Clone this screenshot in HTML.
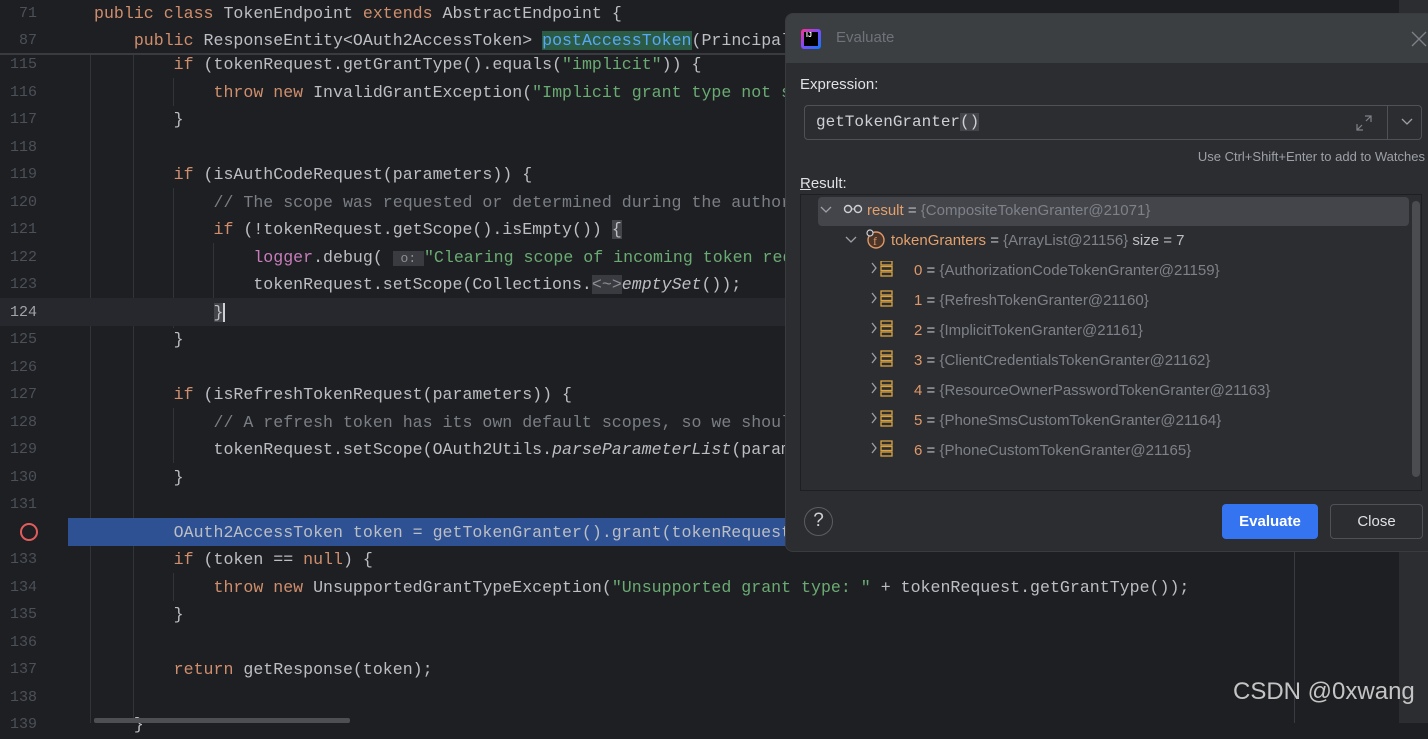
<!DOCTYPE html>
<html><head><meta charset="utf-8"><style>
*{margin:0;padding:0;box-sizing:border-box}
body{width:1428px;height:723px;overflow:hidden;background:#1e1f22;position:relative;font-family:"Liberation Mono",monospace;}
.strip{position:absolute;left:1399px;top:0;width:29px;height:723px;background:#2b2d30}
.vl{position:absolute;left:1294px;top:0;width:1px;height:723px;background:#393b40}
.ln{position:absolute;left:0;width:37px;text-align:right;font-size:15px;color:#4b5059;height:27.5px;line-height:27.5px}
.cl{position:absolute;left:94px;font-size:16.6px;color:#bcbec4;white-space:pre;height:27.5px;line-height:27.5px}
.k{color:#cf8e6d}.s{color:#6aab73}.c{color:#7a7e85}.m{color:#56a8f5}.p{color:#c77dbb}.i{font-style:italic}
.g{position:absolute;width:1px;background:#313438}
.sticky{position:absolute;left:0;top:0;width:1399px;height:55px;background:#1e1f22;border-bottom:2px solid #393b40}
.dlg{position:absolute;left:785px;top:13px;width:650px;height:539px;background:#2b2d30;border-radius:8px;overflow:hidden;font-family:"Liberation Sans",sans-serif;border:1px solid #393b40}
.tb{height:49px;background:#3c3f41;position:relative}
.t{position:absolute;font-size:15px;color:#dfe1e5;white-space:nowrap}
.row{position:absolute;font-size:15px;white-space:nowrap;color:#bcbec4;height:30px;line-height:30px}
.o{color:#e3a06d}.gr{color:#7e8189}.n{color:#e0986a}
.chev{display:inline-block;width:7px;height:7px;border-right:1.5px solid #9da0a8;border-bottom:1.5px solid #9da0a8;}
.arr{position:absolute;width:22px;height:12px}
</style></head><body>
<div class="strip"></div><div class="vl"></div>
<div class="g" style="left:90px;top:55px;height:668px"></div>
<div class="g" style="left:133px;top:55px;height:668px"></div>
<div class="g" style="left:173px;top:78px;height:28px"></div>
<div class="g" style="left:173px;top:188px;height:140px"></div>
<div class="g" style="left:173px;top:408px;height:55px"></div>
<div class="g" style="left:213px;top:243px;height:55px"></div>
<div class="g" style="left:173px;top:573px;height:28px"></div>
<!-- current line -->
<div style="position:absolute;left:0;top:298px;width:1294px;height:28px;background:#26282e"></div>
<!-- breakpoint line -->
<div style="position:absolute;left:68px;top:518px;width:800px;height:28px;background:#2d5192"></div>
<div style="position:absolute;left:20px;top:523px;width:18px;height:18px;border:2px solid #e35c5c;border-radius:50%"></div>

<div class="ln" style="top:51px">115</div><div class="cl" style="top:51px">        <span class="k">if</span> (tokenRequest.getGrantType().equals(<span class="s">"implicit"</span>)) {</div>
<div class="ln" style="top:78.5px">116</div><div class="cl" style="top:78.5px">            <span class="k">throw new</span> InvalidGrantException(<span class="s">"Implicit grant type not supported"</span></div>
<div class="ln" style="top:106px">117</div><div class="cl" style="top:106px">        }</div>
<div class="ln" style="top:133.5px">118</div>
<div class="ln" style="top:161px">119</div><div class="cl" style="top:161px">        <span class="k">if</span> (isAuthCodeRequest(parameters)) {</div>
<div class="ln" style="top:188.5px">120</div><div class="cl c" style="top:188.5px">            // The scope was requested or determined during the authorization</div>
<div class="ln" style="top:216px">121</div><div class="cl" style="top:216px">            <span class="k">if</span> (!tokenRequest.getScope().isEmpty()) <span style="background:#43454a">{</span></div>
<div class="ln" style="top:243.5px">122</div><div class="cl" style="top:243.5px">                <span class="p">logger</span>.debug( <span style="background:#393b40;color:#8c8f96;font-size:13px"> o: </span><span class="s">"Clearing scope of incoming token request"</span></div>
<div class="ln" style="top:271px">123</div><div class="cl" style="top:271px">                tokenRequest.setScope(Collections.<span style="background:#393b40;color:#8c8f96">&lt;~&gt;</span><span class="i">emptySet</span>());</div>
<div class="ln" style="top:298.5px;color:#a1a3ab">124</div><div class="cl" style="top:298.5px">            <span style="background:#43454a">}</span><span style="border-left:2px solid #ced0d6"></span></div>
<div class="ln" style="top:326px">125</div><div class="cl" style="top:326px">        }</div>
<div class="ln" style="top:353.5px">126</div>
<div class="ln" style="top:381px">127</div><div class="cl" style="top:381px">        <span class="k">if</span> (isRefreshTokenRequest(parameters)) {</div>
<div class="ln" style="top:408.5px">128</div><div class="cl c" style="top:408.5px">            // A refresh token has its own default scopes, so we should ignore</div>
<div class="ln" style="top:436px">129</div><div class="cl" style="top:436px">            tokenRequest.setScope(OAuth2Utils.<span class="i">parseParameterList</span>(parameters</div>
<div class="ln" style="top:463.5px">130</div><div class="cl" style="top:463.5px">        }</div>
<div class="ln" style="top:491px">131</div>
<div class="cl" style="top:518.5px">        OAuth2AccessToken token = getTokenGranter().grant(tokenRequest.getGrantType</div>
<div class="ln" style="top:546px">133</div><div class="cl" style="top:546px">        <span class="k">if</span> (token == <span class="k">null</span>) {</div>
<div class="ln" style="top:573.5px">134</div><div class="cl" style="top:573.5px">            <span class="k">throw new</span> UnsupportedGrantTypeException(<span class="s">"Unsupported grant type: "</span> + tokenRequest.getGrantType());</div>
<div class="ln" style="top:601px">135</div><div class="cl" style="top:601px">        }</div>
<div class="ln" style="top:628.5px">136</div>
<div class="ln" style="top:656px">137</div><div class="cl" style="top:656px">        <span class="k">return</span> getResponse(token);</div>
<div class="ln" style="top:683.5px">138</div>
<div class="ln" style="top:711px">139</div><div class="cl" style="top:711px">    }</div>
<div style="position:absolute;left:94px;top:718px;width:256px;height:5px;background:#4d4f53;border-radius:2px"></div>

<div class="sticky">
<div class="ln" style="top:0">71</div><div class="cl" style="top:0;left:94px"><span class="k">public class</span> TokenEndpoint <span class="k">extends</span> AbstractEndpoint {</div>
<div class="ln" style="top:27px">87</div><div class="cl" style="top:27px;left:94px">    <span class="k">public</span> ResponseEntity&lt;OAuth2AccessToken&gt; <span class="m" style="background:#2b5a45">postAccessToken</span>(Principal principal,</div>
</div>

<div style="position:absolute;left:1233px;top:678px;font-family:'Liberation Sans',sans-serif;font-size:24px;color:#c4c4c4;white-space:nowrap">CSDN @0xwang</div>

<div class="dlg">
 <div class="tb">
  <div style="position:absolute;left:15px;top:15px;width:20px;height:20px;border-radius:3px;background:linear-gradient(135deg,#ff318c,#7b4bff 50%,#087cfa)"><div style="position:absolute;left:3px;top:3px;width:14px;height:14px;background:#000;color:#fff;font-size:7px;font-weight:bold;line-height:8px;padding-left:2px">IJ</div></div>
  <div class="t" style="left:50px;top:15px;color:#6f737a">Evaluate</div>
  <svg style="position:absolute;left:625px;top:17px" width="16" height="16"><path d="M1 1L15 15M15 1L1 15" stroke="#7e8189" stroke-width="1.3"/></svg>
 </div>
 <div class="t" style="left:14px;top:62px">Expression:</div>
 <div style="position:absolute;left:18px;top:91px;width:618px;height:35px;border:1px solid #4e5157;border-radius:4px">
  <div style="position:absolute;left:11px;top:7px;font-family:'Liberation Mono',monospace;font-size:16px;color:#ced0d6">getTokenGranter<span style="background:#43454a">()</span></div>
  <svg style="position:absolute;left:550px;top:8px" width="18" height="18"><path d="M10 2H16V8M16 2L11 7M8 16H2V10M2 16L7 11" stroke="#7e8189" fill="none" stroke-width="1.2"/></svg>
  <div style="position:absolute;left:582px;top:0;width:1px;height:33px;background:#4e5157"></div>
  <svg style="position:absolute;left:596px;top:11px" width="12" height="10"><path d="M1 2L6 7L11 2" stroke="#9da0a8" fill="none" stroke-width="1.3"/></svg>
 </div>
 <div class="t" style="right:9px;left:auto;top:135px;font-size:13px;color:#9da0a8">Use Ctrl+Shift+Enter to add to Watches</div>
 <div class="t" style="left:14px;top:161px"><u>R</u>esult:</div>
 <div style="position:absolute;left:14px;top:180px;width:622px;height:297px;border:1px solid #1e1f22;background:#2b2d30">
  <div style="position:absolute;left:17px;top:2px;width:591px;height:29px;background:#43454a;border-radius:4px"></div>
  <div style="position:absolute;left:611px;top:6px;width:8px;height:276px;background:#4a4c50;border-radius:4px"></div>
 </div>
 <!-- rows -->
 <svg style="position:absolute;left:34px;top:191px" width="12" height="10"><path d="M1 2L6 7L11 2" stroke="#9da0a8" fill="none" stroke-width="1.3"/></svg>
 <svg style="position:absolute;left:57px;top:190px" width="20" height="10"><circle cx="5" cy="5" r="3.5" stroke="#ced0d6" fill="none" stroke-width="1.4"/><circle cx="15" cy="5" r="3.5" stroke="#ced0d6" fill="none" stroke-width="1.4"/><path d="M8.5 5H11.5" stroke="#ced0d6"/></svg>
 <div class="row" style="left:81px;top:182px"><span class="o">result</span> = <span class="gr">{CompositeTokenGranter@21071}</span></div>
 <svg style="position:absolute;left:59px;top:221px" width="12" height="10"><path d="M1 2L6 7L11 2" stroke="#9da0a8" fill="none" stroke-width="1.3"/></svg>
 <svg style="position:absolute;left:79px;top:214px" width="22" height="22"><circle cx="11" cy="12" r="8" stroke="#e0986a" fill="#4a3528" stroke-width="1.4"/><text x="8" y="17" font-size="12" fill="#e0986a" font-family="Liberation Serif">f</text><circle cx="5" cy="5" r="3" stroke="#ced0d6" fill="#2b2d30" stroke-width="1.2"/></svg>
 <div class="row" style="left:105px;top:212px"><span class="o">tokenGranters</span> = <span class="gr">{ArrayList@21156}</span>  size = 7</div>
 <div id="items"></div>
 <div style="position:absolute;left:18px;top:493px;width:29px;height:29px;border:1.5px solid #5a5d63;border-radius:50%;color:#ced0d6;font-size:19px;text-align:center;line-height:26px">?</div>
 <div style="position:absolute;left:436px;top:490px;width:96px;height:35px;background:#3574f0;border-radius:4px;color:#fff;font-weight:bold;font-size:15px;text-align:center;line-height:35px">Evaluate</div>
 <div style="position:absolute;left:544px;top:490px;width:93px;height:35px;border:1px solid #4e5157;border-radius:4px;color:#dfe1e5;font-size:15px;text-align:center;line-height:33px">Close</div>
 <!-- items rendered below -->
 <div class="row" style="left:128px;top:242px"><span class="n">0</span> = <span class="gr">{AuthorizationCodeTokenGranter@21159}</span></div>
 <div class="row" style="left:128px;top:272px"><span class="n">1</span> = <span class="gr">{RefreshTokenGranter@21160}</span></div>
 <div class="row" style="left:128px;top:302px"><span class="n">2</span> = <span class="gr">{ImplicitTokenGranter@21161}</span></div>
 <div class="row" style="left:128px;top:332px"><span class="n">3</span> = <span class="gr">{ClientCredentialsTokenGranter@21162}</span></div>
 <div class="row" style="left:128px;top:362px"><span class="n">4</span> = <span class="gr">{ResourceOwnerPasswordTokenGranter@21163}</span></div>
 <div class="row" style="left:128px;top:392px"><span class="n">5</span> = <span class="gr">{PhoneSmsCustomTokenGranter@21164}</span></div>
 <div class="row" style="left:128px;top:422px"><span class="n">6</span> = <span class="gr">{PhoneCustomTokenGranter@21165}</span></div>
 <svg style="position:absolute;left:84px;top:247px" width="30" height="200">
  <g fill="none" stroke-width="1.3">
   <g id="it"><path d="M2 2L6 7L2 12" stroke="#9da0a8"/><rect x="11" y="0" width="11" height="4" stroke="#d9a343"/><rect x="11" y="5.5" width="11" height="4" stroke="#d9a343"/><rect x="11" y="11" width="11" height="4" stroke="#d9a343"/></g>
   <use href="#it" y="30"/><use href="#it" y="60"/><use href="#it" y="90"/><use href="#it" y="120"/><use href="#it" y="150"/><use href="#it" y="180"/>
  </g>
 </svg>
</div>
</body></html>
